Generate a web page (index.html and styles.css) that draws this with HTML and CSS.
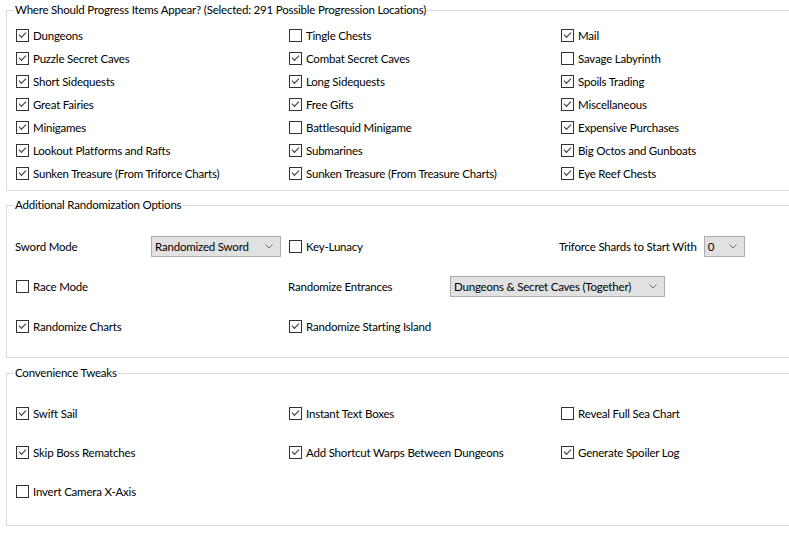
FILE: index.html
```html
<!DOCTYPE html>
<html lang="en">
<head>
    <meta charset="UTF-8">
    <title>Randomizer Options</title>
    <link rel="stylesheet" href="styles.css">
</head>
<body>
    <fieldset class="group group--progress">
        <legend>Where Should Progress Items Appear? (Selected: 291 Possible Progression Locations)</legend>
        <div class="checks">
            <label class="check"><span class="box on"></span>Dungeons</label>
            <label class="check"><span class="box"></span>Tingle Chests</label>
            <label class="check"><span class="box on"></span>Mail</label>
            <label class="check"><span class="box on"></span>Puzzle Secret Caves</label>
            <label class="check"><span class="box on"></span>Combat Secret Caves</label>
            <label class="check"><span class="box"></span>Savage Labyrinth</label>
            <label class="check"><span class="box on"></span>Short Sidequests</label>
            <label class="check"><span class="box on"></span>Long Sidequests</label>
            <label class="check"><span class="box on"></span>Spoils Trading</label>
            <label class="check"><span class="box on"></span>Great Fairies</label>
            <label class="check"><span class="box on"></span>Free Gifts</label>
            <label class="check"><span class="box on"></span>Miscellaneous</label>
            <label class="check"><span class="box on"></span>Minigames</label>
            <label class="check"><span class="box"></span>Battlesquid Minigame</label>
            <label class="check"><span class="box on"></span>Expensive Purchases</label>
            <label class="check"><span class="box on"></span>Lookout Platforms and Rafts</label>
            <label class="check"><span class="box on"></span>Submarines</label>
            <label class="check"><span class="box on"></span>Big Octos and Gunboats</label>
            <label class="check"><span class="box on"></span>Sunken Treasure (From Triforce Charts)</label>
            <label class="check"><span class="box on"></span>Sunken Treasure (From Treasure Charts)</label>
            <label class="check"><span class="box on"></span>Eye Reef Chests</label>
        </div>
    </fieldset>

    <fieldset class="group group--extra">
        <legend>Additional Randomization Options</legend>
        <div class="options">
            <div class="field">
                <span class="field__label field__label--sword">Sword Mode</span>
                <div class="combo combo--sword">
                    <span class="combo__text">Randomized Sword</span>
                    <svg class="combo__arrow" width="8" height="5" viewBox="0 0 8 5"><polyline points="0.5,0.5 4,4 7.5,0.5" fill="none" stroke="#707070"/></svg>
                </div>
            </div>
            <label class="check"><span class="box"></span>Key-Lunacy</label>
            <div class="field field--shards">
                <span class="field__label">Triforce Shards to Start With</span>
                <div class="combo combo--shards">
                    <span class="combo__text">0</span>
                    <svg class="combo__arrow" width="8" height="5" viewBox="0 0 8 5"><polyline points="0.5,0.5 4,4 7.5,0.5" fill="none" stroke="#707070"/></svg>
                </div>
            </div>

            <label class="check"><span class="box"></span>Race Mode</label>
            <div class="field field--wide">
                <span class="field__label field__label--entrances">Randomize Entrances</span>
                <div class="combo combo--entrances">
                    <span class="combo__text">Dungeons &amp; Secret Caves (Together)</span>
                    <svg class="combo__arrow" width="8" height="5" viewBox="0 0 8 5"><polyline points="0.5,0.5 4,4 7.5,0.5" fill="none" stroke="#707070"/></svg>
                </div>
            </div>

            <label class="check"><span class="box on"></span>Randomize Charts</label>
            <label class="check"><span class="box on"></span>Randomize Starting Island</label>
        </div>
    </fieldset>

    <fieldset class="group group--tweaks">
        <legend>Convenience Tweaks</legend>
        <div class="checks checks--loose">
            <label class="check"><span class="box on"></span>Swift Sail</label>
            <label class="check"><span class="box on"></span>Instant Text Boxes</label>
            <label class="check"><span class="box"></span>Reveal Full Sea Chart</label>
            <label class="check"><span class="box on"></span>Skip Boss Rematches</label>
            <label class="check"><span class="box on"></span>Add Shortcut Warps Between Dungeons</label>
            <label class="check"><span class="box on"></span>Generate Spoiler Log</label>
            <label class="check"><span class="box"></span>Invert Camera X-Axis</label>
        </div>
    </fieldset>
</body>
</html>
```

FILE: styles.css
```css
body {
    margin: 0;
    padding: 2px 0 0 6px;
    overflow: hidden;
    background-color: #fff;
    color: #000;
    font-family: Lato, "Segoe UI", sans-serif;
    font-size: 11.5px;
    letter-spacing: -0.2px;
}

.group {
    box-sizing: border-box;
    width: 784px;
    margin: 0 0 6px;
    border: 1px solid #dcdcdc;
    padding: 6px 0 5px 9px;
    min-width: 0;
}

.group legend {
    margin-left: -2px;
    padding: 0 1px;
    line-height: 16px;
}

.group--extra {
    margin-bottom: 7px;
    padding: 13px 0 11px 9px;
}

.group--tweaks {
    padding: 13px 0 14px 9px;
}

.checks {
    display: grid;
    grid-template-columns: 273px 272px 1fr;
    grid-auto-rows: 23px;
    align-items: center;
}

.checks--loose {
    grid-auto-rows: 39px;
}

.check {
    display: flex;
    align-items: center;
    gap: 4px;
    white-space: nowrap;
}

.box {
    position: relative;
    box-sizing: border-box;
    width: 13px;
    height: 13px;
    flex: none;
    border: 1px solid #333;
    background-color: #fff;
}

/* tick drawn as a rotated corner */
.box.on::after {
    content: "";
    position: absolute;
    left: 2px;
    top: 2px;
    width: 6px;
    height: 3px;
    border-left: 1px solid #333;
    border-bottom: 1px solid #333;
    transform: rotate(-45deg);
}

.options {
    display: grid;
    grid-template-columns: 273px 272px 1fr;
    grid-auto-rows: 40px;
    align-items: center;
}

.field {
    display: flex;
    align-items: center;
}

.field__label {
    white-space: nowrap;
}

.field__label--sword {
    width: 136px;
    margin-left: -1px;
    flex: none;
}

.field--shards {
    margin-left: -2px;
    gap: 7px;
}

.field--wide {
    grid-column: span 2;
}

.field__label--entrances {
    width: 162px;
    margin-left: -1px;
    flex: none;
}

.combo {
    box-sizing: border-box;
    display: flex;
    align-items: center;
    height: 21px;
    padding-left: 3px;
    border: 1px solid #adadad;
    background-color: #e1e1e1;
    white-space: nowrap;
}

.combo__text {
    flex: 1;
}

.combo__arrow {
    margin: 0 7px 0 4px;
}

.combo--sword {
    width: 130px;
}

.combo--shards {
    width: 41px;
}

.combo--entrances {
    width: 215px;
}
```
